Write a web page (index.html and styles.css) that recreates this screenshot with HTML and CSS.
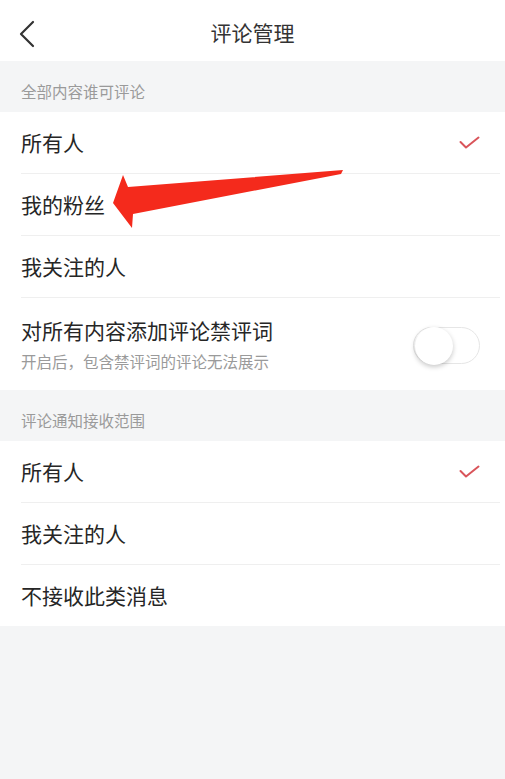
FILE: index.html
```html
<!DOCTYPE html>
<html lang="zh-CN">
<head>
    <meta charset="UTF-8">
    <title>评论管理</title>
    <link rel="stylesheet" href="styles.css">
</head>
<body>
    <header class="nav-bar">
        <button class="back-btn" aria-label="返回">
            <svg width="16" height="28" viewBox="0 0 16 28">
                <polyline points="14,2 2,14 14,26" fill="none" stroke="#333" stroke-width="2.2" stroke-linecap="round" stroke-linejoin="round"/>
            </svg>
        </button>
        <h1 class="nav-title">评论管理</h1>
    </header>

    <section class="group">
        <div class="group-label">全部内容谁可评论</div>
        <ul class="option-list">
            <li class="option selected">所有人
                <svg class="check" width="21" height="14" viewBox="0 0 21 14">
                    <polyline points="1.5,6 7,11.5 19.5,1.5" fill="none" stroke="#d9545a" stroke-width="2" stroke-linecap="round" stroke-linejoin="round"/>
                </svg>
            </li>
            <li class="option">我的粉丝</li>
            <li class="option">我关注的人</li>
            <li class="option option-switch">
                <div class="switch-text">
                    <div class="switch-title">对所有内容添加评论禁评词</div>
                    <div class="switch-desc">开启后，包含禁评词的评论无法展示</div>
                </div>
                <span class="toggle"><span class="knob"></span></span>
            </li>
        </ul>
    </section>

    <section class="group">
        <div class="group-label">评论通知接收范围</div>
        <ul class="option-list">
            <li class="option selected">所有人
                <svg class="check" width="21" height="14" viewBox="0 0 21 14">
                    <polyline points="1.5,6 7,11.5 19.5,1.5" fill="none" stroke="#d9545a" stroke-width="2" stroke-linecap="round" stroke-linejoin="round"/>
                </svg>
            </li>
            <li class="option">我关注的人</li>
            <li class="option last">不接收此类消息</li>
        </ul>
    </section>

    <!-- red pointer drawn over the list -->
    <svg class="pointer" width="505" height="260" viewBox="0 0 505 260">
        <polygon points="113,203 123,175 128,187 343,170 341,174 133,214 132,228" fill="#f42a1c"/>
    </svg>
</body>
</html>
```

FILE: styles.css
```css
* {
    box-sizing: border-box;
}

html, body {
    margin: 0;
    padding: 0;
}

body {
    font-family: "Noto Sans CJK SC", "Noto Sans", sans-serif;
    background-color: #f4f5f6;
    color: #222;
    min-height: 779px;
    position: relative;
}

.nav-bar {
    height: 61px;
    background-color: #fff;
    display: flex;
    align-items: center;
    justify-content: center;
    position: relative;
}

.back-btn {
    position: absolute;
    left: 19px;
    top: 20px;
    border: none;
    background: none;
    padding: 0;
    width: 16px;
    height: 28px;
}

.back-btn svg {
    display: block;
}

.nav-title {
    margin: 0;
    font-size: 21px;
    font-weight: normal;
    color: #333;
    line-height: 28px;
    padding-top: 3px;
}

.group-label {
    padding: 20px 21px 11px;
    font-size: 15.5px;
    line-height: 20px;
    color: #9a9a9a;
}

.option-list {
    list-style: none;
    margin: 0;
    padding: 0;
    background-color: #fff;
}

.option {
    height: 62px;
    margin-left: 21px;
    margin-right: 5px;
    padding-right: 20px;
    padding-bottom: 2px;
    border-bottom: 1px solid #efefef;
    display: flex;
    align-items: center;
    justify-content: space-between;
    font-size: 21px;
    color: #262626;
}

.option.last {
    border-bottom: none;
    height: 61px;
}

.check {
    display: block;
    margin-top: 2px;
}

.option-switch {
    height: 92px;
    border-bottom: none;
    padding-bottom: 0;
}

.switch-title {
    font-size: 21px;
    line-height: 28px;
    color: #262626;
}

.switch-desc {
    margin-top: 6px;
    font-size: 15.5px;
    line-height: 22px;
    color: #9a9a9a;
}

.toggle {
    width: 67px;
    height: 37px;
    border: 1px solid #e6e6e6;
    border-radius: 19px;
    background-color: #fff;
    position: relative;
    margin-top: 2px;
}

.toggle .knob {
    position: absolute;
    left: 1px;
    top: -1px;
    width: 38px;
    height: 38px;
    border-radius: 50%;
    background-color: #fff;
    box-shadow: 0 2px 5px rgba(0, 0, 0, 0.22);
}

.pointer {
    position: absolute;
    left: 0;
    top: 0;
}
```
